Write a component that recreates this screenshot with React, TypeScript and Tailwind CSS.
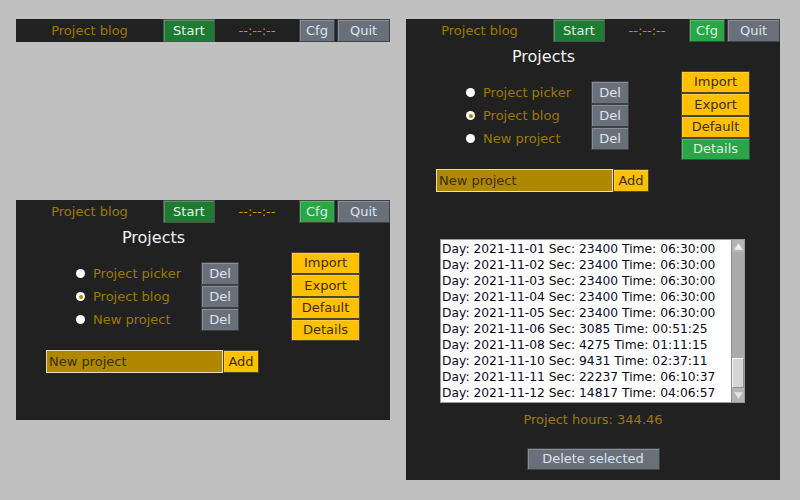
import React from 'react'

type Tone = 'gray' | 'start' | 'green' | 'yellow'

const tones: Record<Tone, string> = {
  gray: 'bg-[#6a707a] text-[#dbe4f2] border-[#3e4147]',
  start: 'bg-[#1f7b34] text-[#e4f2e6] border-[#4e5250]',
  green: 'bg-[#29a645] text-[#dff3e4] border-[#3e4a42]',
  yellow: 'bg-[#ffc000] text-[#3a2e00] border-[#4a4636]',
}

function Btn({ tone, className, children }: { tone: Tone; className: string; children: React.ReactNode }) {
  return (
    <div
      className={`flex items-center justify-center border shadow-[inset_1px_1px_0_rgba(255,255,255,0.22)] ${tones[tone]} ${className}`}
    >
      {children}
    </div>
  )
}

function TopBar({ cfgActive }: { cfgActive: boolean }) {
  return (
    <div className="flex h-[23px] w-[374px] bg-[#212121]">
      <div className="flex w-[147px] items-center justify-center text-[#9c7b00]">Project blog</div>
      <Btn tone="start" className="w-[52px]">Start</Btn>
      <div className="flex w-[84px] items-center justify-center text-[#c79a00]">--:--:--</div>
      <Btn tone={cfgActive ? 'green' : 'gray'} className="w-[36px]">Cfg</Btn>
      <div className="w-[2px]" />
      <Btn tone="gray" className="w-[53px]">Quit</Btn>
    </div>
  )
}

const projects = [
  { name: 'Project picker', selected: false },
  { name: 'Project blog', selected: true },
  { name: 'New project', selected: false },
]

function ProjectsBody({ detailsActive }: { detailsActive: boolean }) {
  return (
    <>
      <div className="mt-[5px] h-[20px] w-[275px] text-center text-[16px] leading-[20px] text-[#f2f2f2]">Projects</div>
      <div className="mt-[4px] flex">
        <div className="mt-[10px] flex w-[275px] flex-col pl-[60px]">
          {projects.map((p) => (
            <div key={p.name} className="flex h-[23px] items-center">
              <div className="flex h-[9px] w-[9px] items-center justify-center rounded-full bg-white">
                {p.selected && <div className="h-[4px] w-[4px] rounded-full bg-[#b08800]" />}
              </div>
              <div className="ml-[8px] w-[108px] text-[#9c7b00]">{p.name}</div>
              <Btn tone="gray" className="h-[23px] w-[38px]">Del</Btn>
            </div>
          ))}
        </div>
        <div className="flex w-[69px] flex-col">
          <Btn tone="yellow" className="h-[22px]">Import</Btn>
          <Btn tone="yellow" className="h-[23px]">Export</Btn>
          <Btn tone="yellow" className="h-[22px]">Default</Btn>
          <Btn tone={detailsActive ? 'green' : 'yellow'} className="h-[22px]">Details</Btn>
        </div>
      </div>
      <div className="ml-[30px] mt-[9px] flex h-[23px]">
        <div className="flex w-[177px] items-center border border-[#e6dcc0] bg-[#b08800] pl-[2px] text-[#3a2e00]">
          New project
        </div>
        <Btn tone="yellow" className="w-[36px]">Add</Btn>
      </div>
    </>
  )
}

const days = [
  'Day: 2021-11-01 Sec: 23400 Time: 06:30:00',
  'Day: 2021-11-02 Sec: 23400 Time: 06:30:00',
  'Day: 2021-11-03 Sec: 23400 Time: 06:30:00',
  'Day: 2021-11-04 Sec: 23400 Time: 06:30:00',
  'Day: 2021-11-05 Sec: 23400 Time: 06:30:00',
  'Day: 2021-11-06 Sec: 3085 Time: 00:51:25',
  'Day: 2021-11-08 Sec: 4275 Time: 01:11:15',
  'Day: 2021-11-10 Sec: 9431 Time: 02:37:11',
  'Day: 2021-11-11 Sec: 22237 Time: 06:10:37',
  'Day: 2021-11-12 Sec: 14817 Time: 04:06:57',
]

function DayList() {
  return (
    <div className="ml-[34px] mt-[47px] flex h-[164px] w-[305px] border border-[#9a9a9a] bg-white">
      <div className="flex-1 pl-[1px] pt-[1px] text-[12.3px] leading-[16px] text-[#0a0a1e]">
        {days.map((d) => (
          <div key={d} className="h-[16px] whitespace-nowrap">{d}</div>
        ))}
      </div>
      <div className="flex w-[13px] flex-col border-l border-[#8c8c8c] bg-[#ababab]">
        <div className="flex h-[12px] items-center justify-center bg-[#b4b4b4]">
          <svg width="9" height="7" viewBox="0 0 9 7">
            <polygon points="4.5,0 9,7 0,7" fill="#f0f0f0" stroke="#c8c8c8" strokeWidth="0.5" />
          </svg>
        </div>
        <div className="flex-1" />
        <div className="h-[30px] border border-[#f4f4f4] border-b-[#909090] border-r-[#909090] bg-[#d6d6d6]" />
        <div className="flex h-[14px] items-center justify-center bg-[#b4b4b4]">
          <svg width="9" height="7" viewBox="0 0 9 7">
            <polygon points="0,0 9,0 4.5,7" fill="#e4e4e4" stroke="#c8c8c8" strokeWidth="0.5" />
          </svg>
        </div>
      </div>
    </div>
  )
}

export default function App() {
  return (
    <div className="flex h-[500px] w-[800px] gap-4 bg-[#c0c0c0] pl-4 pt-[19px] font-['DejaVu_Sans',sans-serif] text-[13px] leading-[16px]">
      <div className="flex w-[374px] flex-col">
        <TopBar cfgActive={false} />
        <div className="mt-[158px] flex h-[220px] w-[374px] flex-col bg-[#212121]">
          <TopBar cfgActive={true} />
          <ProjectsBody detailsActive={false} />
        </div>
      </div>
      <div className="flex h-[461px] w-[374px] flex-col bg-[#212121]">
        <TopBar cfgActive={true} />
        <ProjectsBody detailsActive={true} />
        <DayList />
        <div className="mt-[9px] text-center text-[#9c7b00]">Project hours: 344.46</div>
        <div className="mt-[20px] flex justify-center">
          <Btn tone="gray" className="h-[22px] w-[133px]">Delete selected</Btn>
        </div>
      </div>
    </div>
  )
}
